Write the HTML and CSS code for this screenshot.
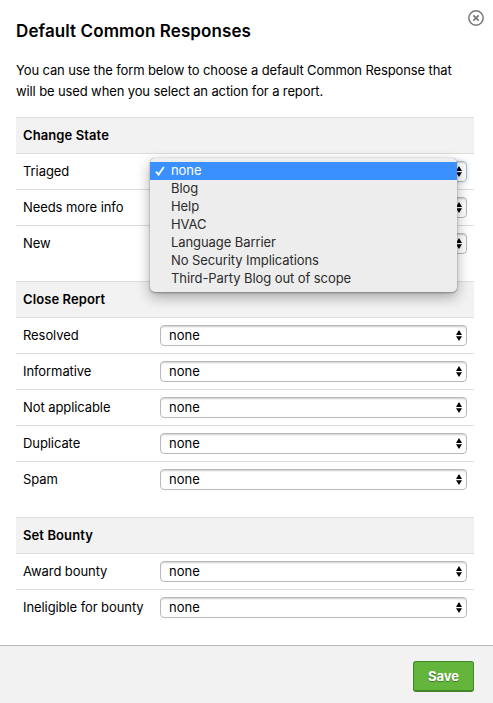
FILE: index.html
```html
<!DOCTYPE html>
<html lang="en">
<head>
<meta charset="utf-8">
<title>Default Common Responses</title>
<link rel="stylesheet" href="styles.css">
</head>
<body>
<main class="modal">
  <button class="close" aria-label="Close">
    <svg width="16" height="16" viewBox="0 0 16 16" fill="none" stroke="#777"><circle cx="8" cy="8" r="7.2" stroke-width="1.5"/><path d="M5.3 5.3l5.4 5.4M10.7 5.3l-5.4 5.4" stroke-width="1.7"/></svg>
  </button>
  <div class="body">
    <h1 class="title">Default Common Responses</h1>
    <p class="intro">You can use the form below to choose a default Common Response that<br>will be used when you select an action for a report.</p>
    <section class="group">
      <h2 class="heading">Change State</h2>
      <div class="row"><span class="label">Triaged</span><span class="select focused"><i class="arrows"></i></span>
        <ul class="menu">
          <li class="option selected"><svg class="check" width="10" height="10" viewBox="0 0 10 10" fill="none" stroke="#fff" stroke-width="1.8"><path d="M1 5.6L3.6 8.6L8.8 0.9"/></svg>none</li>
          <li class="option">Blog</li>
          <li class="option">Help</li>
          <li class="option">HVAC</li>
          <li class="option">Language Barrier</li>
          <li class="option">No Security Implications</li>
          <li class="option">Third-Party Blog out of scope</li>
        </ul>
      </div>
      <div class="row"><span class="label">Needs more info</span><span class="select"><i class="arrows"></i></span></div>
      <div class="row"><span class="label">New</span><span class="select"><i class="arrows"></i></span></div>
    </section>
    <section class="group">
      <h2 class="heading">Close Report</h2>
      <div class="row"><span class="label">Resolved</span><span class="select"><span>none</span><i class="arrows"></i></span></div>
      <div class="row"><span class="label">Informative</span><span class="select"><span>none</span><i class="arrows"></i></span></div>
      <div class="row"><span class="label">Not applicable</span><span class="select"><span>none</span><i class="arrows"></i></span></div>
      <div class="row"><span class="label">Duplicate</span><span class="select"><span>none</span><i class="arrows"></i></span></div>
      <div class="row"><span class="label">Spam</span><span class="select"><span>none</span><i class="arrows"></i></span></div>
    </section>
    <section class="group">
      <h2 class="heading">Set Bounty</h2>
      <div class="row"><span class="label">Award bounty</span><span class="select"><span>none</span><i class="arrows"></i></span></div>
      <div class="row"><span class="label">Ineligible for bounty</span><span class="select"><span>none</span><i class="arrows"></i></span></div>
    </section>
  </div>
  <footer class="footer"><button class="save">Save</button></footer>
</main>
</body>
</html>
```
FILE: styles.css
```css
* { box-sizing: border-box; }
body {
  margin: 0;
  background: #fff;
  color: #000;
  font: 13px/21px Inter, "Liberation Sans", sans-serif;
  letter-spacing: -0.08px;
}
.modal {
  position: relative;
  height: 703px;
  display: flex;
  flex-direction: column;
  overflow: hidden;
}
.close {
  position: absolute;
  top: 10px;
  right: 9px;
  width: 16px;
  height: 16px;
  padding: 0;
  border: 0;
  background: none;
}
.close svg { display: block; }
.body { flex: 1; padding: 20px 19px 0 16px; }
.title {
  margin: 0;
  font-size: 17px;
  line-height: 22px;
  font-weight: 600;
  letter-spacing: 0.1px;
}
.intro { margin: 18px 0 15px; white-space: nowrap; letter-spacing: -0.12px; }
.group { margin-bottom: 20px; }
.heading {
  margin: 0;
  height: 36px;
  padding-left: 7px;
  border-top: 1px solid #ddd;
  background: #f2f2f2;
  font-size: 13px;
  line-height: 34px;
  font-weight: 600;
  letter-spacing: 0.1px;
}
.row {
  position: relative;
  display: flex;
  height: 36px;
  padding: 7px 7px 0;
  border-top: 1px solid #ddd;
}
.label { width: 137px; }
.select {
  flex: 1;
  display: flex;
  align-items: center;
  height: 21px;
  padding: 0 4px 0 8px;
  border: 1px solid #b9b9b9;
  border-radius: 4px;
  box-shadow: inset 0 2px 2px -1px #ccc;
  letter-spacing: 0;
}
.focused { box-shadow: inset 0 2px 2px -1px #ccc, 0 0 4px #c5def5; }
.arrows {
  width: 6px;
  height: 11px;
  margin-left: auto;
  background: #000;
  clip-path: polygon(0 45%, 50% 0, 100% 45%, 0 45%, 0 57%, 100% 57%, 50% 100%, 0 57%);
}
.menu {
  position: absolute;
  z-index: 2;
  top: 4px;
  left: 134px;
  width: 307px;
  height: 134px;
  margin: 0;
  padding: 4px 0;
  border-radius: 5px;
  background: #ededed;
  box-shadow: 0 0 1px #888, 0 1px 2px rgba(0,0,0,.3), 0 5px 14px rgba(0,0,0,.32);
  list-style: none;
  color: #2b2b2b;
}
.option { position: relative; padding-left: 21px; line-height: 17px; height: 18px; }
.selected { background: #3b90ff; color: #fff; }
.check { position: absolute; left: 5px; top: 4px; }
.footer {
  display: flex;
  justify-content: flex-end;
  height: 58px;
  padding: 15px 19px 0;
  border-top: 1px solid #b8b8b8;
  background: #f2f2f2;
}
.save {
  width: 61px;
  height: 31px;
  padding: 0;
  border: 1px solid #43862a;
  border-bottom-width: 2px;
  border-radius: 3px;
  background: #64b53c;
  color: #fff;
  font: 700 13px/28px Inter, sans-serif;
  text-shadow: 0 1px 1px rgba(0,0,0,.35);
}
```
